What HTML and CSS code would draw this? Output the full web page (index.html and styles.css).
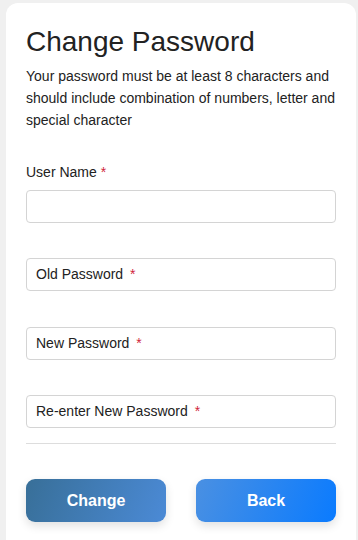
FILE: index.html
```html
<!DOCTYPE html>
<html lang="en">
<head>
  <meta charset="UTF-8">
  <title>Change Password</title>
  <link rel="stylesheet" href="styles.css">
</head>
<body>

  <div class="card">
    <h2>Change Password</h2>
    <p class="hint">Your password must be at least 8 characters and should include combination of numbers, letter and special character</p>

    <div class="field">
      <label>User Name <span class="req">*</span></label>
      <div class="input"></div>
    </div>

    <div class="field">
      <div class="input">Old Password <span class="req">*</span></div>
    </div>

    <div class="field">
      <div class="input">New Password <span class="req">*</span></div>
    </div>

    <div class="field">
      <div class="input">Re-enter New Password <span class="req">*</span></div>
    </div>

    <hr>

    <div class="actions">
      <button class="btn change">Change</button>
      <button class="btn back">Back</button>
    </div>
  </div>

</body>
</html>
```

FILE: styles.css
```css
body {
  font-family: "Liberation Sans", Arial, sans-serif;
  background: #f0f0f0;
  margin: 0;
  padding: 3px 2px 0 6px;
  color: #222;
}
.card {
  background: #fff;
  border-radius: 12px;
  padding: 22px 20px 40px 20px;
  min-height: 560px;
}
.card h2 {
  font-size: 28px;
  font-weight: normal;
  margin: 0 0 6px 0;
  line-height: 34px;
  color: #222;
}
.hint {
  font-size: 14px;
  line-height: 22px;
  margin: 0 0 32px 0;
}
.field {
  margin-bottom: 35px;
}
.field:nth-child(4) {
  margin-bottom: 36px;
}
.field label {
  display: block;
  font-size: 14px;
  line-height: 18px;
  margin-bottom: 9px;
}
.req {
  color: #d0243c;
}
.input {
  height: 33px;
  box-sizing: border-box;
  border: 1px solid #d4d4d4;
  border-radius: 4px;
  padding: 0 9px;
  font-size: 14px;
  line-height: 31px;
}
.input .req {
  margin-left: 3px;
}
hr {
  border: 0;
  border-top: 1px solid #ddd;
  margin: -20px 0 35px 0;
}
.actions {
  display: flex;
  justify-content: space-between;
}
.btn {
  width: 140px;
  height: 43px;
  border: 0;
  border-radius: 9px;
  color: #fff;
  font-family: "Liberation Sans", Arial, sans-serif;
  font-size: 16px;
  font-weight: bold;
  box-shadow: 0 4px 10px rgba(0, 0, 0, 0.12);
}
.change {
  background: linear-gradient(110deg, #386f98, #4b8ad6);
}
.back {
  background: linear-gradient(110deg, #4a90e2, #0a7bff);
}
```
